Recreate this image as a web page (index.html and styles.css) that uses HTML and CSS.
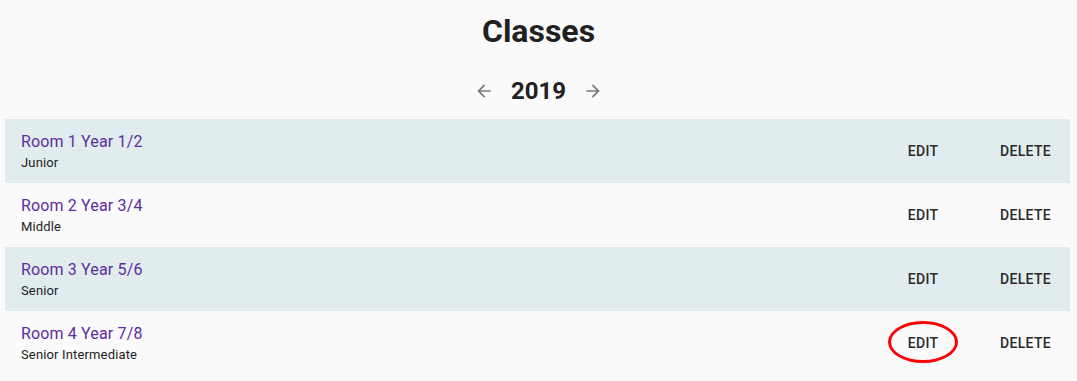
FILE: index.html
```html
<!DOCTYPE html>
<html>
<head>
<meta charset="utf-8">
<link rel="stylesheet" href="styles.css">
</head>
<body>
<h1 class="title">Classes</h1>
<div class="year-nav">
  <span class="icon-btn"><svg viewBox="0 0 24 24" width="20" height="20"><path d="M20 11H7.83l5.59-5.59L12 4l-8 8 8 8 1.41-1.41L7.83 13H20v-2z"/></svg></span>
  <span class="year">2019</span>
  <span class="icon-btn"><svg viewBox="0 0 24 24" width="20" height="20"><path d="M12 4l-1.41 1.41L16.17 11H4v2h12.17l-5.58 5.59L12 20l8-8z"/></svg></span>
</div>
<ul class="class-list">
  <li class="row striped">
    <div class="text"><div class="primary">Room 1 Year 1/2</div><div class="secondary">Junior</div></div>
    <div class="actions"><span class="btn btn-edit">EDIT</span><span class="btn">DELETE</span></div>
  </li>
  <li class="row">
    <div class="text"><div class="primary">Room 2 Year 3/4</div><div class="secondary">Middle</div></div>
    <div class="actions"><span class="btn btn-edit">EDIT</span><span class="btn">DELETE</span></div>
  </li>
  <li class="row striped">
    <div class="text"><div class="primary">Room 3 Year 5/6</div><div class="secondary">Senior</div></div>
    <div class="actions"><span class="btn btn-edit">EDIT</span><span class="btn">DELETE</span></div>
  </li>
  <li class="row">
    <div class="text"><div class="primary">Room 4 Year 7/8</div><div class="secondary">Senior Intermediate</div></div>
    <div class="actions"><span class="btn btn-edit">EDIT<span class="circle"></span></span><span class="btn">DELETE</span></div>
  </li>
</ul>
</body>
</html>
```
FILE: styles.css
```css
html, body {
  margin: 0;
  padding: 0;
  background: #fafafa;
  font-family: Roboto, "Liberation Sans", sans-serif;
  color: #212121;
}
.title {
  margin: 0;
  padding-top: 12px;
  font-size: 32px;
  line-height: 38px;
  font-weight: 700;
  text-align: center;
  color: #212121;
}
.year-nav {
  margin-top: 21px;
  height: 40px;
  display: flex;
  align-items: center;
  justify-content: center;
  gap: 17px;
}
.icon-btn {
  width: 20px;
  height: 20px;
  display: flex;
  fill: #7a7a7a;
}
.year {
  font-size: 24px;
  font-weight: 700;
  line-height: 28px;
}
.class-list {
  list-style: none;
  margin: 8px 7px 0 5px;
  padding: 0;
}
.row {
  height: 64px;
  display: flex;
  align-items: center;
  justify-content: space-between;
  padding: 0 11px 0 16px;
}
.striped {
  background: #e0ecee;
}
.text {
  padding-top: 2px;
}
.primary {
  font-size: 16px;
  line-height: 20px;
  letter-spacing: 0.15px;
  color: #5e2ca0;
}
.secondary {
  font-size: 13px;
  line-height: 19px;
  letter-spacing: 0.15px;
  padding-top: 1px;
  color: #222;
}
.actions {
  display: flex;
  align-items: center;
  gap: 37px;
}
.btn {
  position: relative;
  font-size: 14px;
  font-weight: 500;
  letter-spacing: 0.3px;
  line-height: 24px;
  padding: 6px 8px;
  min-width: 48px;
  text-align: center;
  color: #2a2a2a;
}
.circle {
  position: absolute;
  left: 50%;
  top: 50%;
  width: 64px;
  height: 36px;
  border: 3px solid #f00;
  border-radius: 50%;
  transform: translate(-50%, calc(-50% - 1px));
}
```
